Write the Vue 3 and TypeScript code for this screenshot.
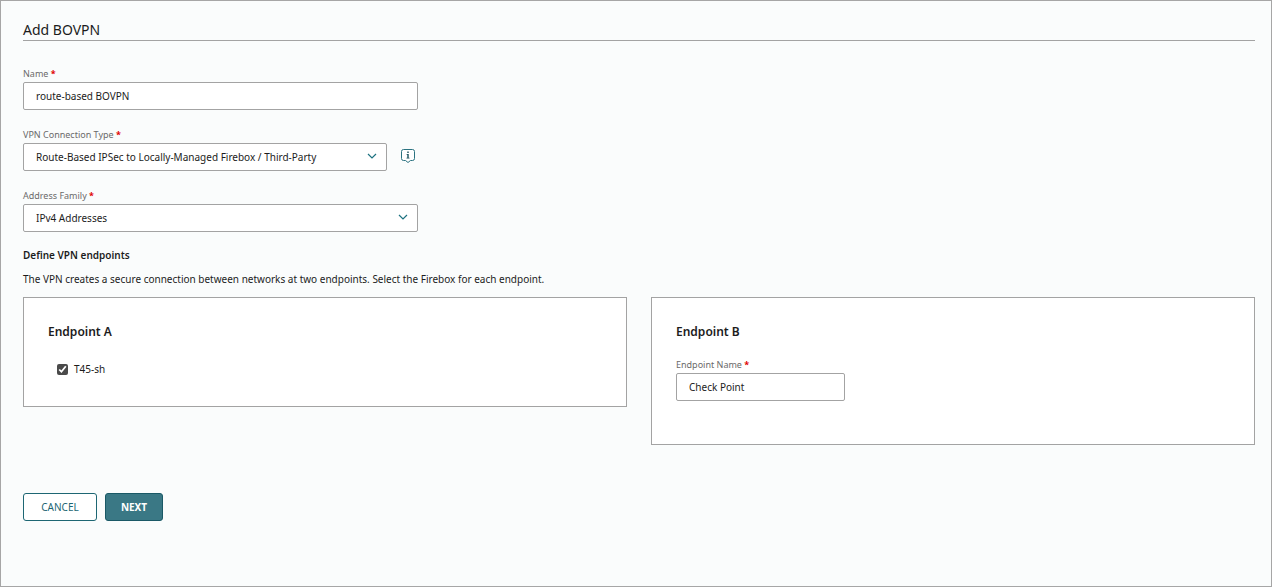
<script setup lang="ts">
import { ref } from 'vue'

const name = ref('route-based BOVPN')
const connectionType = ref('Route-Based IPSec to Locally-Managed Firebox / Third-Party')
const addressFamily = ref('IPv4 Addresses')
const fireboxSelected = ref(true)
const endpointName = ref('Check Point')

const connectionTypes = ['Route-Based IPSec to Locally-Managed Firebox / Third-Party']
const addressFamilies = ['IPv4 Addresses']
</script>

<template>
  <main class="page">
    <h1 class="title">Add BOVPN</h1>
    <form @submit.prevent>
      <div class="field">
        <label class="label" for="name">Name <span class="required">*</span></label>
        <input id="name" v-model="name" class="control" type="text" />
      </div>
      <div class="field">
        <label class="label" for="type">VPN Connection Type <span class="required">*</span></label>
        <div class="row">
          <div class="select">
            <select id="type" v-model="connectionType" class="control">
              <option v-for="t in connectionTypes" :key="t">{{ t }}</option>
            </select>
            <svg class="chevron" viewBox="0 0 10 6" aria-hidden="true"><path d="M1 1l4 4 4-4" /></svg>
          </div>
          <button class="info" type="button" aria-label="About connection types">
            <svg viewBox="0 0 16 16" aria-hidden="true">
              <path class="bubble" d="M3.500 1.500h9a2 2 0 0 1 2 2v7a2 2 0 0 1-2 2h-2L8 14.500l-2.500-2h-2a2 2 0 0 1-2-2v-7a2 2 0 0 1 2-2z" />
              <path class="mark" d="M7.300 3.500h1.400v1.500H7.300zM6.600 6h2.100v3.700h.8v.8H6.500v-.8h.8V6.800h-.7z" />
            </svg>
          </button>
        </div>
      </div>
      <div class="field">
        <label class="label" for="family">Address Family <span class="required">*</span></label>
        <div class="select">
          <select id="family" v-model="addressFamily" class="control">
            <option v-for="f in addressFamilies" :key="f">{{ f }}</option>
          </select>
          <svg class="chevron" viewBox="0 0 10 6" aria-hidden="true"><path d="M1 1l4 4 4-4" /></svg>
        </div>
      </div>

      <h2 class="subtitle">Define VPN endpoints</h2>
      <p class="description">
        The VPN creates a secure connection between networks at two endpoints. Select the Firebox for each endpoint.
      </p>

      <div class="endpoints">
        <section class="card">
          <h3 class="card-title">Endpoint A</h3>
          <label class="check">
            <input v-model="fireboxSelected" type="checkbox" />
            <span>T45-sh</span>
          </label>
        </section>
        <section class="card card-b">
          <h3 class="card-title">Endpoint B</h3>
          <label class="label" for="endpoint">Endpoint Name <span class="required">*</span></label>
          <input id="endpoint" v-model="endpointName" class="control short" type="text" />
        </section>
      </div>

      <div class="actions">
        <button class="button" type="button">CANCEL</button>
        <button class="button primary" type="submit">NEXT</button>
      </div>
    </form>
  </main>
</template>

<style>
body {
  margin: 0;
  background: #fafcfc;
}
</style>

<style scoped>
.page {
  box-sizing: border-box;
  min-height: 100vh;
  padding: 18px 16px 24px 22px;
  border: 1px solid #a6a6a6;
  background: #fafcfc;
  color: #1c1c1c;
  font-family: "Noto Sans", "Open Sans", sans-serif;
  font-size: 10px;
  line-height: 16px;
}
.title {
  margin: 0 0 25px;
  border-bottom: 1px solid #a3a3a3;
  font-size: 14px;
  font-weight: 400;
  line-height: 21px;
}
.field {
  max-width: 395px;
  margin-bottom: 17px;
}
.label {
  display: block;
  color: #6a6a6a;
  font-size: 9px;
  line-height: 16px;
}
.required {
  color: #e00000;
  font-weight: 700;
}
.control {
  display: block;
  box-sizing: border-box;
  width: 100%;
  height: 28px;
  margin: 0;
  padding: 0 12px;
  border: 1px solid #a3a3a3;
  border-radius: 2px;
  background: #fff;
  color: #1c1c1c;
  font: inherit;
  appearance: none;
}
.row {
  display: flex;
  align-items: center;
  gap: 12px;
}
.select {
  position: relative;
  flex: 1;
}
.chevron {
  position: absolute;
  top: 10px;
  right: 10px;
  width: 10px;
  height: 6px;
  fill: none;
  stroke: #1d7280;
  stroke-width: 1.2;
  pointer-events: none;
}
.info {
  width: 19px;
  height: 18px;
  padding: 0 1px 2px;
  border: 0;
  background: none;
}
.info svg {
  display: block;
  width: 16px;
  height: 16px;
}
.bubble {
  fill: #fff;
  stroke: #2a7280;
}
.mark {
  fill: #174f5c;
}
.subtitle {
  margin: -2px 0 8px;
  font-size: 10px;
  font-weight: 600;
  line-height: 16px;
}
.description {
  margin: 0 0 10px;
}
.endpoints {
  display: grid;
  grid-template-columns: 1fr 1fr;
  align-items: start;
  gap: 24px;
}
.card {
  padding: 24px;
  border: 1px solid #a3a3a3;
  background: #fff;
}
.card-b {
  padding-bottom: 43px;
}
.card-title {
  margin: 0 0 16px;
  font-size: 12px;
  font-weight: 600;
  line-height: 19px;
}
.short {
  width: 169px;
}
.check {
  display: flex;
  align-items: center;
  gap: 6px;
  margin-left: 9px;
  padding: 4px 0 5px;
}
.check input {
  width: 11px;
  height: 11px;
  margin: 0;
  accent-color: #4a4a4a;
}
.actions {
  display: flex;
  gap: 8px;
  margin-top: 48px;
}
.button {
  min-width: 74px;
  height: 28px;
  padding: 0 16px;
  border: 1px solid #1d6673;
  border-radius: 3px;
  background: #fff;
  color: #1d6673;
  font: inherit;
}
.primary {
  min-width: 58px;
  padding: 0 14px;
  border-color: #1a5966;
  background: #3a7885;
  color: #fff;
  font-weight: 700;
}
</style>
